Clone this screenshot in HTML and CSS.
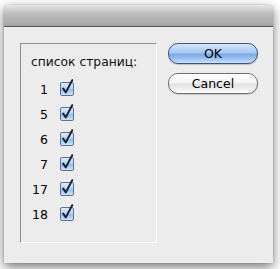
FILE: index.html
```html
<!DOCTYPE html>
<html>
<head>
<meta charset="utf-8">
<link rel="stylesheet" href="styles.css">
</head>
<body>
<div class="window">
  <div class="titlebar"></div>
  <div class="content">
    <div class="group">
      <div class="label">список страниц:</div>
      <div class="rows">
        <div class="row"><span class="num">1</span><span class="cb"><svg width="17" height="17" viewBox="0 0 17 17"><defs><linearGradient id="g" x1="0" y1="0" x2="0" y2="1"><stop offset="0" stop-color="#e2eefc"/><stop offset="0.5" stop-color="#b3d1f5"/><stop offset="0.55" stop-color="#94bdee"/><stop offset="1" stop-color="#d3e8fd"/></linearGradient></defs><rect x="0.5" y="3.5" width="13" height="13" rx="1.5" fill="url(#g)" stroke="#5d7096"/><path d="M3.2 9.6 L5.8 13.4 L12.2 1.2" fill="none" stroke="#1d2233" stroke-width="2" stroke-linecap="round" stroke-linejoin="round"/></svg></span></div>
        <div class="row"><span class="num">5</span><span class="cb"><svg width="17" height="17" viewBox="0 0 17 17"><rect x="0.5" y="3.5" width="13" height="13" rx="1.5" fill="url(#g)" stroke="#5d7096"/><path d="M3.2 9.6 L5.8 13.4 L12.2 1.2" fill="none" stroke="#1d2233" stroke-width="2" stroke-linecap="round" stroke-linejoin="round"/></svg></span></div>
        <div class="row"><span class="num">6</span><span class="cb"><svg width="17" height="17" viewBox="0 0 17 17"><rect x="0.5" y="3.5" width="13" height="13" rx="1.5" fill="url(#g)" stroke="#5d7096"/><path d="M3.2 9.6 L5.8 13.4 L12.2 1.2" fill="none" stroke="#1d2233" stroke-width="2" stroke-linecap="round" stroke-linejoin="round"/></svg></span></div>
        <div class="row"><span class="num">7</span><span class="cb"><svg width="17" height="17" viewBox="0 0 17 17"><rect x="0.5" y="3.5" width="13" height="13" rx="1.5" fill="url(#g)" stroke="#5d7096"/><path d="M3.2 9.6 L5.8 13.4 L12.2 1.2" fill="none" stroke="#1d2233" stroke-width="2" stroke-linecap="round" stroke-linejoin="round"/></svg></span></div>
        <div class="row"><span class="num">17</span><span class="cb"><svg width="17" height="17" viewBox="0 0 17 17"><rect x="0.5" y="3.5" width="13" height="13" rx="1.5" fill="url(#g)" stroke="#5d7096"/><path d="M3.2 9.6 L5.8 13.4 L12.2 1.2" fill="none" stroke="#1d2233" stroke-width="2" stroke-linecap="round" stroke-linejoin="round"/></svg></span></div>
        <div class="row"><span class="num">18</span><span class="cb"><svg width="17" height="17" viewBox="0 0 17 17"><rect x="0.5" y="3.5" width="13" height="13" rx="1.5" fill="url(#g)" stroke="#5d7096"/><path d="M3.2 9.6 L5.8 13.4 L12.2 1.2" fill="none" stroke="#1d2233" stroke-width="2" stroke-linecap="round" stroke-linejoin="round"/></svg></span></div>
      </div>
    </div>
    <div class="buttons">
      <div class="btn ok">OK</div>
      <div class="btn cancel">Cancel</div>
    </div>
  </div>
</div>
</body>
</html>
```
FILE: styles.css
```css
html, body {
  margin: 0;
  padding: 0;
}
body {
  width: 280px;
  height: 269px;
  overflow: hidden;
  background: #ffffff;
  font-family: "DejaVu Sans", "Liberation Sans", sans-serif;
  font-size: 12px;
  color: #000;
}
.window {
  margin: 5px 0 0 4px;
  width: 269px;
  height: 258px;
  background: #ececec;
  border-radius: 4px 4px 0 0;
  box-shadow: 0 4px 12px rgba(0,0,0,0.55), 0 0 1px rgba(0,0,0,0.5);
  display: flex;
  flex-direction: column;
}
.titlebar {
  height: 21px;
  border-radius: 4px 4px 0 0;
  background: linear-gradient(#e6e6e6, #bdbdbd 40%, #a5a5a5);
  border-bottom: 1px solid #555;
}
.content {
  flex: 1;
  display: flex;
  padding: 16px 0 0 16px;
}
.group {
  width: 135px;
  height: 198px;
  border-left: 1px solid #8e8e8e;
  border-top: 1px solid #8e8e8e;
  border-right: 1px solid #fdfdfd;
  border-bottom: 1px solid #fdfdfd;
}
.label {
  padding: 11px 0 0 10px;
  line-height: 15px;
  height: 15px;
  color: #111;
  font-size: 12.3px;
}
.rows {
  display: flex;
  flex-direction: column;
  padding-top: 7px;
}
.row {
  height: 25px;
  display: flex;
  align-items: center;
}
.num {
  width: 27px;
  text-align: right;
  line-height: 15px;
  font-size: 12.5px;
}
.cb {
  margin-left: 12px;
  width: 17px;
  height: 17px;
  margin-top: -5px;
}
.cb svg {
  display: block;
}
.buttons {
  display: flex;
  flex-direction: column;
  gap: 9px;
  margin-left: 11px;
}
.btn {
  width: 88px;
  height: 19px;
  border-radius: 10px;
  text-align: center;
  line-height: 19px;
  font-size: 12.5px;
}
.ok {
  border: 1px solid #3f5089;
  background: linear-gradient(#d5e5fa, #a8c8f2 45%, #7fa9e6 55%, #a9ccf5 85%, #cfe6fd);
  box-shadow: 0 1px 1px rgba(0,0,0,0.2);
}
.cancel {
  border: 1px solid #6f6f6f;
  background: linear-gradient(#ffffff, #f4f4f4 45%, #e2e2e2 55%, #f2f2f2 85%, #ffffff);
  box-shadow: 0 1px 1px rgba(0,0,0,0.15);
}
```
